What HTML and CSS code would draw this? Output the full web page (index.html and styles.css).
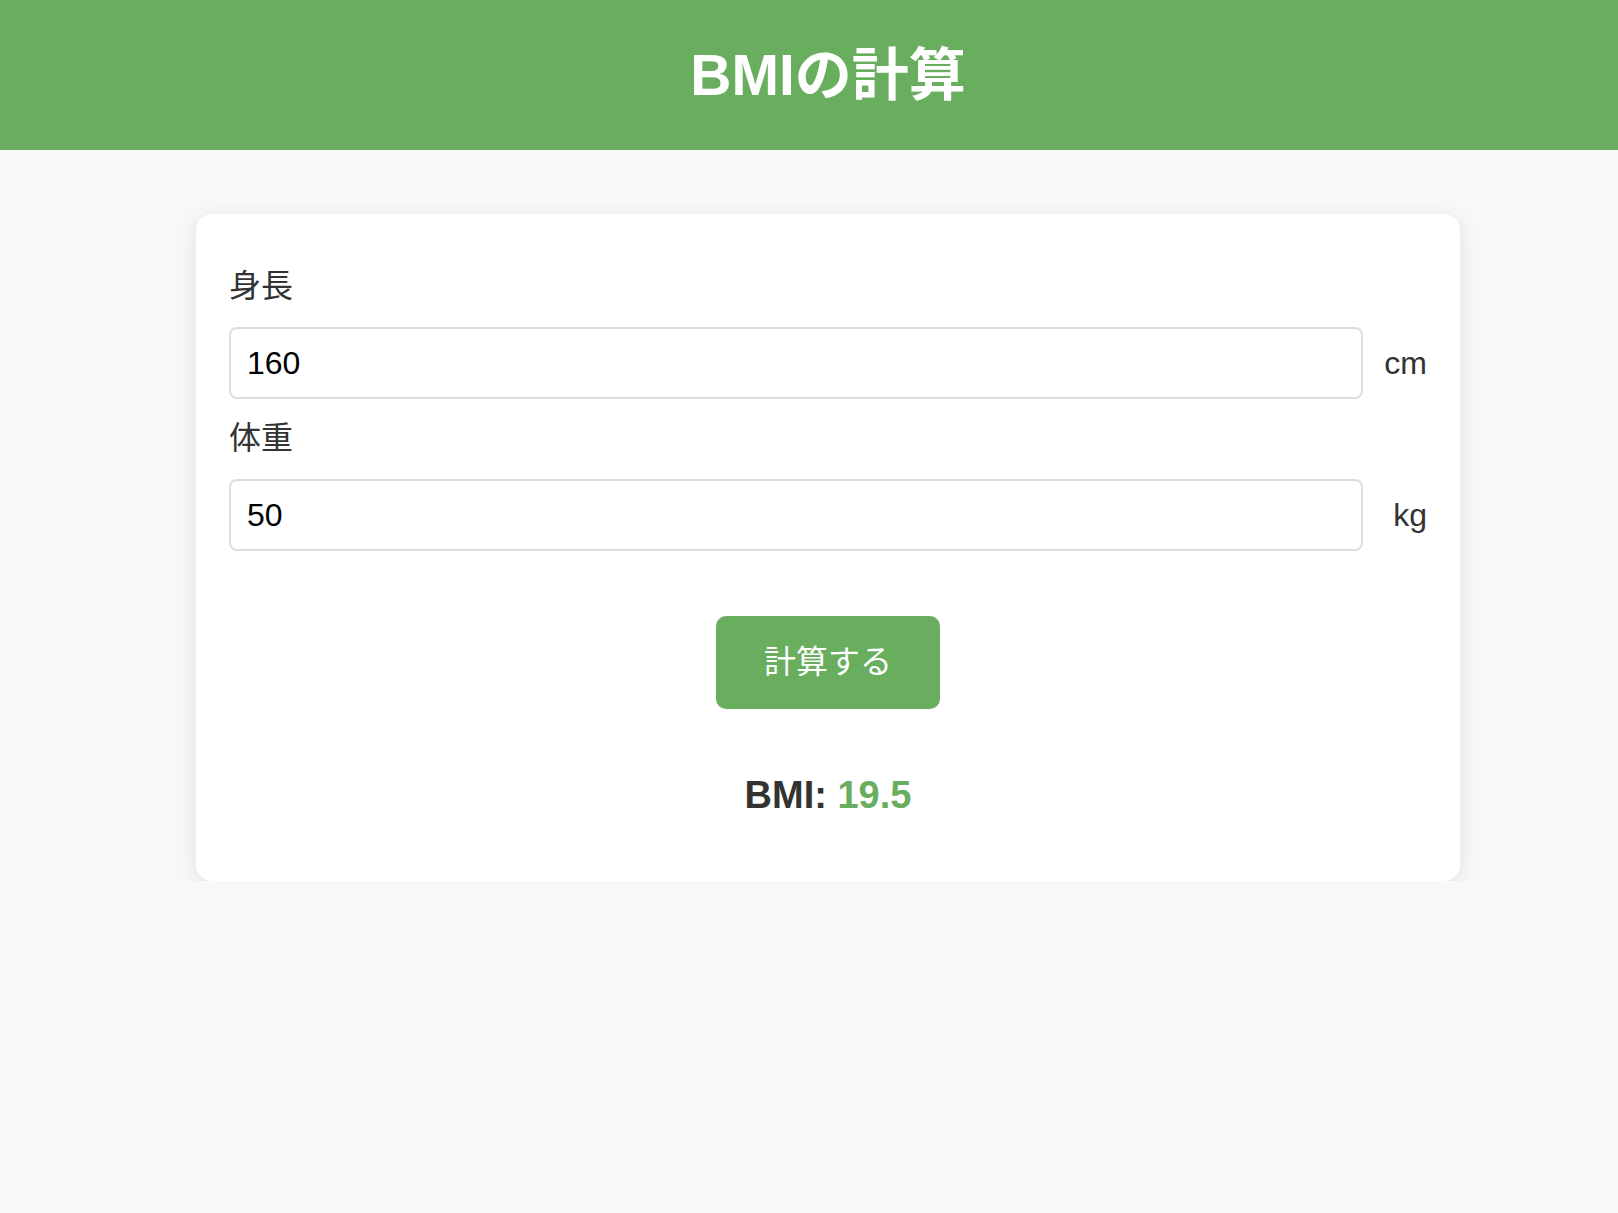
FILE: index.html
```html
<!DOCTYPE html>
<html lang="ja">
<head>
<meta charset="utf-8">
<title>BMIの計算</title>
<link rel="stylesheet" href="styles.css">
</head>
<body>
<div class="page">
  <header class="site-header">
    <h1 class="title">BMIの計算</h1>
  </header>
  <main class="card">
    <div class="form-group">
      <label class="label" for="height">身長</label>
      <div class="input-row">
        <input class="field" id="height" type="text" value="160">
        <span class="unit">cm</span>
      </div>
    </div>
    <div class="form-group">
      <label class="label" for="weight">体重</label>
      <div class="input-row">
        <input class="field" id="weight" type="text" value="50">
        <span class="unit">kg</span>
      </div>
    </div>
    <div class="actions">
      <button class="btn" type="button">計算する</button>
    </div>
    <div class="result">BMI: <span class="result-value">19.5</span></div>
  </main>
</div>
</body>
</html>
```

FILE: styles.css
```css
html, body {
  margin: 0;
  padding: 0;
  overflow: hidden;
  background: #f8f8f8;
}

body {
  font-family: "Liberation Sans", Arial, "Noto Sans CJK JP", sans-serif;
  color: #333333;
}

.page {
  width: 1656px;
}

.site-header {
  background: #69ae5e;
  height: 150px;
  display: flex;
  align-items: center;
  justify-content: center;
}

.title {
  margin: 0;
  color: #ffffff;
  font-size: 57px;
  font-weight: 700;
  line-height: 1;
}

.card {
  box-sizing: border-box;
  width: 1264px;
  margin: 64px auto 0;
  background: #ffffff;
  border-radius: 16px;
  box-shadow: 0 4px 20px rgba(0, 0, 0, 0.1);
  padding: 48px 33px 48px;
}

.form-group {
  margin-bottom: 15px;
}

.label {
  display: block;
  font-size: 32px;
  line-height: 48px;
  color: #333333;
  margin-bottom: 17px;
}

.input-row {
  display: flex;
  align-items: center;
}

.field {
  flex: 1;
  min-width: 0;
  box-sizing: border-box;
  height: 72px;
  padding: 0 16px;
  border: 2px solid #dddddd;
  border-radius: 8px;
  font-family: "Liberation Sans", Arial, sans-serif;
  font-size: 32px;
  color: #000000;
  background: #ffffff;
  outline: none;
}

.unit {
  width: 64px;
  text-align: right;
  font-size: 32px;
  color: #333333;
}

.actions {
  display: flex;
  justify-content: center;
  margin-top: 65px;
}

.btn {
  background: #69ae5e;
  color: #ffffff;
  border: none;
  border-radius: 10px;
  padding: 24px 48px;
  font-family: "Liberation Sans", Arial, "Noto Sans CJK JP", sans-serif;
  font-size: 32px;
  line-height: 45px;
  cursor: pointer;
}

.result {
  margin-top: 58px;
  text-align: center;
  font-size: 38px;
  line-height: 57px;
  font-weight: 700;
  color: #333333;
  margin-bottom: 9px;
}

.result-value {
  color: #69ae5e;
}
```
